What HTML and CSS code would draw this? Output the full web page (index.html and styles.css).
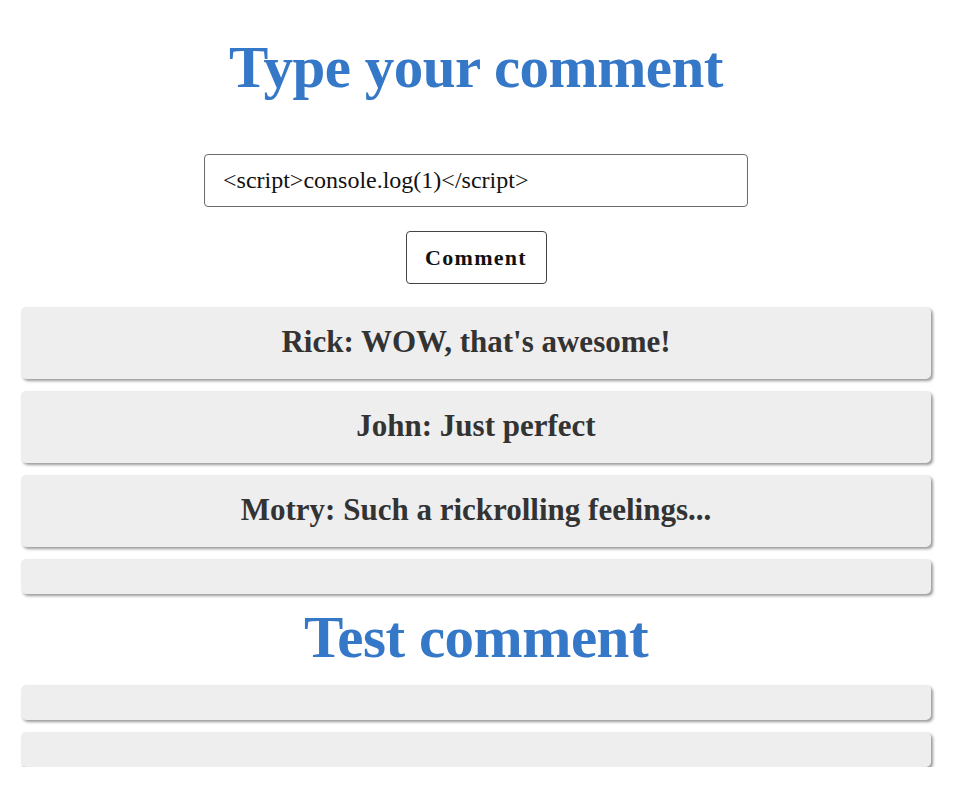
FILE: index.html
```html
<!DOCTYPE html>
<html>
<head>
<meta charset="utf-8">
<link rel="stylesheet" href="styles.css">
</head>
<body>
<main class="page">
  <h1 class="title">Type your comment</h1>
  <form class="comment-form">
    <input class="comment-input" type="text" value="<script>console.log(1)</script>">
    <button class="comment-button" type="button">Comment</button>
  </form>
  <section class="comments">
    <div class="comment">Rick: WOW, that's awesome!</div>
    <div class="comment">John: Just perfect</div>
    <div class="comment">Motry: Such a rickrolling feelings...</div>
    <div class="comment"></div>
    <h2 class="comment-title">Test comment</h2>
    <div class="comment"></div>
    <div class="comment"></div>
  </section>
</main>
</body>
</html>
```

FILE: styles.css
```css
html, body {
  margin: 0;
  padding: 0;
  background: #ffffff;
}

.page {
  font-family: "Liberation Serif", "Times New Roman", serif;
  padding: 0 29px 0 21px;
}

.title {
  margin: 0;
  padding-top: 32px;
  text-align: center;
  color: #3578c8;
  font-size: 59px;
  line-height: 70px;
  letter-spacing: -0.5px;
  font-weight: bold;
}

.comment-form {
  display: flex;
  flex-direction: column;
  align-items: center;
  margin-top: 52px;
}

.comment-input {
  box-sizing: border-box;
  width: 544px;
  height: 53px;
  padding: 0 18px;
  border: 1.5px solid #6b6b6b;
  border-radius: 4px;
  font-family: "Liberation Serif", "Times New Roman", serif;
  font-size: 24px;
  color: #111;
  outline: none;
}

.comment-button {
  box-sizing: border-box;
  margin-top: 24px;
  width: 141px;
  height: 53px;
  border: 1.5px solid #444;
  border-radius: 4px;
  background: #fff;
  font-family: "Liberation Serif", "Times New Roman", serif;
  font-size: 22px;
  font-weight: bold;
  letter-spacing: 1.3px;
  color: #111;
}

.comments {
  display: flex;
  flex-direction: column;
  gap: 12px;
  margin-top: 23px;
}

.comment {
  box-sizing: border-box;
  min-height: 35px;
  padding: 16px 10px 18px;
  background: #eeeeee;
  border-radius: 5px;
  box-shadow: 2px 2px 3px #9a9a9a;
  text-align: center;
  color: #333;
  font-size: 31px;
  line-height: 38px;
  font-weight: bold;
}

.comment:empty {
  padding: 0;
}

.comment-title {
  margin: -2px 0 2px;
  text-align: center;
  color: #3578c8;
  font-size: 59px;
  line-height: 67px;
  letter-spacing: -0.5px;
  font-weight: bold;
}
```
